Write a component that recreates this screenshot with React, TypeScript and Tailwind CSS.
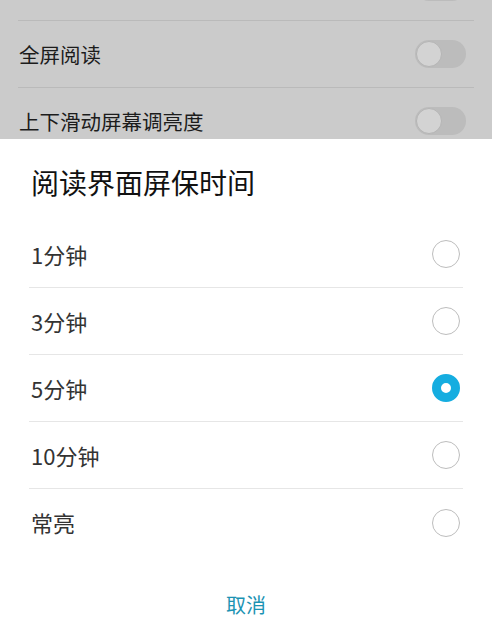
const font = { fontFamily: '"Noto Sans CJK SC", "Noto Sans", sans-serif' };

function Toggle() {
  return (
    <div className="relative h-[28px] w-[51px] rounded-full bg-[#bcbcbc]">
      <div className="absolute left-[1px] top-[1px] h-[26px] w-[26px] rounded-full border border-[#b5b5b5] bg-[#d3d3d3]" />
    </div>
  );
}

function SettingRow({ label }: { label: string }) {
  return (
    <div className="flex h-[67px] shrink-0 items-center justify-between border-b border-[#bababa] pl-[1px] pr-[8px]">
      <span className="text-[20.5px] leading-none text-[#1c1c1c]">{label}</span>
      <Toggle />
    </div>
  );
}

function Radio({ checked }: { checked: boolean }) {
  if (checked) {
    return <div className="h-[28px] w-[28px] rounded-full border-[9px] border-[#15ade0] bg-white" />;
  }
  return <div className="h-[28px] w-[28px] rounded-full border-[1.5px] border-[#bdbdbd] bg-white" />;
}

const options = ['1分钟', '3分钟', '5分钟', '10分钟', '常亮'];

export default function App() {
  return (
    <div className="flex h-[618px] w-[492px] flex-col overflow-hidden bg-white" style={font}>
      <div className="h-[139px] shrink-0 overflow-hidden bg-[#cbcbcb] px-[18px]">
        <div className="mt-[-46px] flex flex-col">
          <SettingRow label="字体设置" />
          <SettingRow label="全屏阅读" />
          <SettingRow label="上下滑动屏幕调亮度" />
        </div>
      </div>
      <div className="flex flex-1 flex-col px-[29px]">
        <div className="flex h-[82px] items-center pl-[2px] pt-[3px] text-[28px] text-[#111]">阅读界面屏保时间</div>
        {options.map((o, i) => (
          <div
            key={o}
            className={`flex h-[67px] items-center justify-between pl-[2px] pr-[3px] ${i < options.length - 1 ? 'border-b border-[#e6e6e6]' : ''}`}
          >
            <span className="text-[22px] text-[#333]">{o}</span>
            <Radio checked={o === '5分钟'} />
          </div>
        ))}
        <div className="flex flex-1 items-center justify-center pt-[36px] text-[20px] leading-none text-[#1b93b3]">取消</div>
      </div>
    </div>
  );
}
